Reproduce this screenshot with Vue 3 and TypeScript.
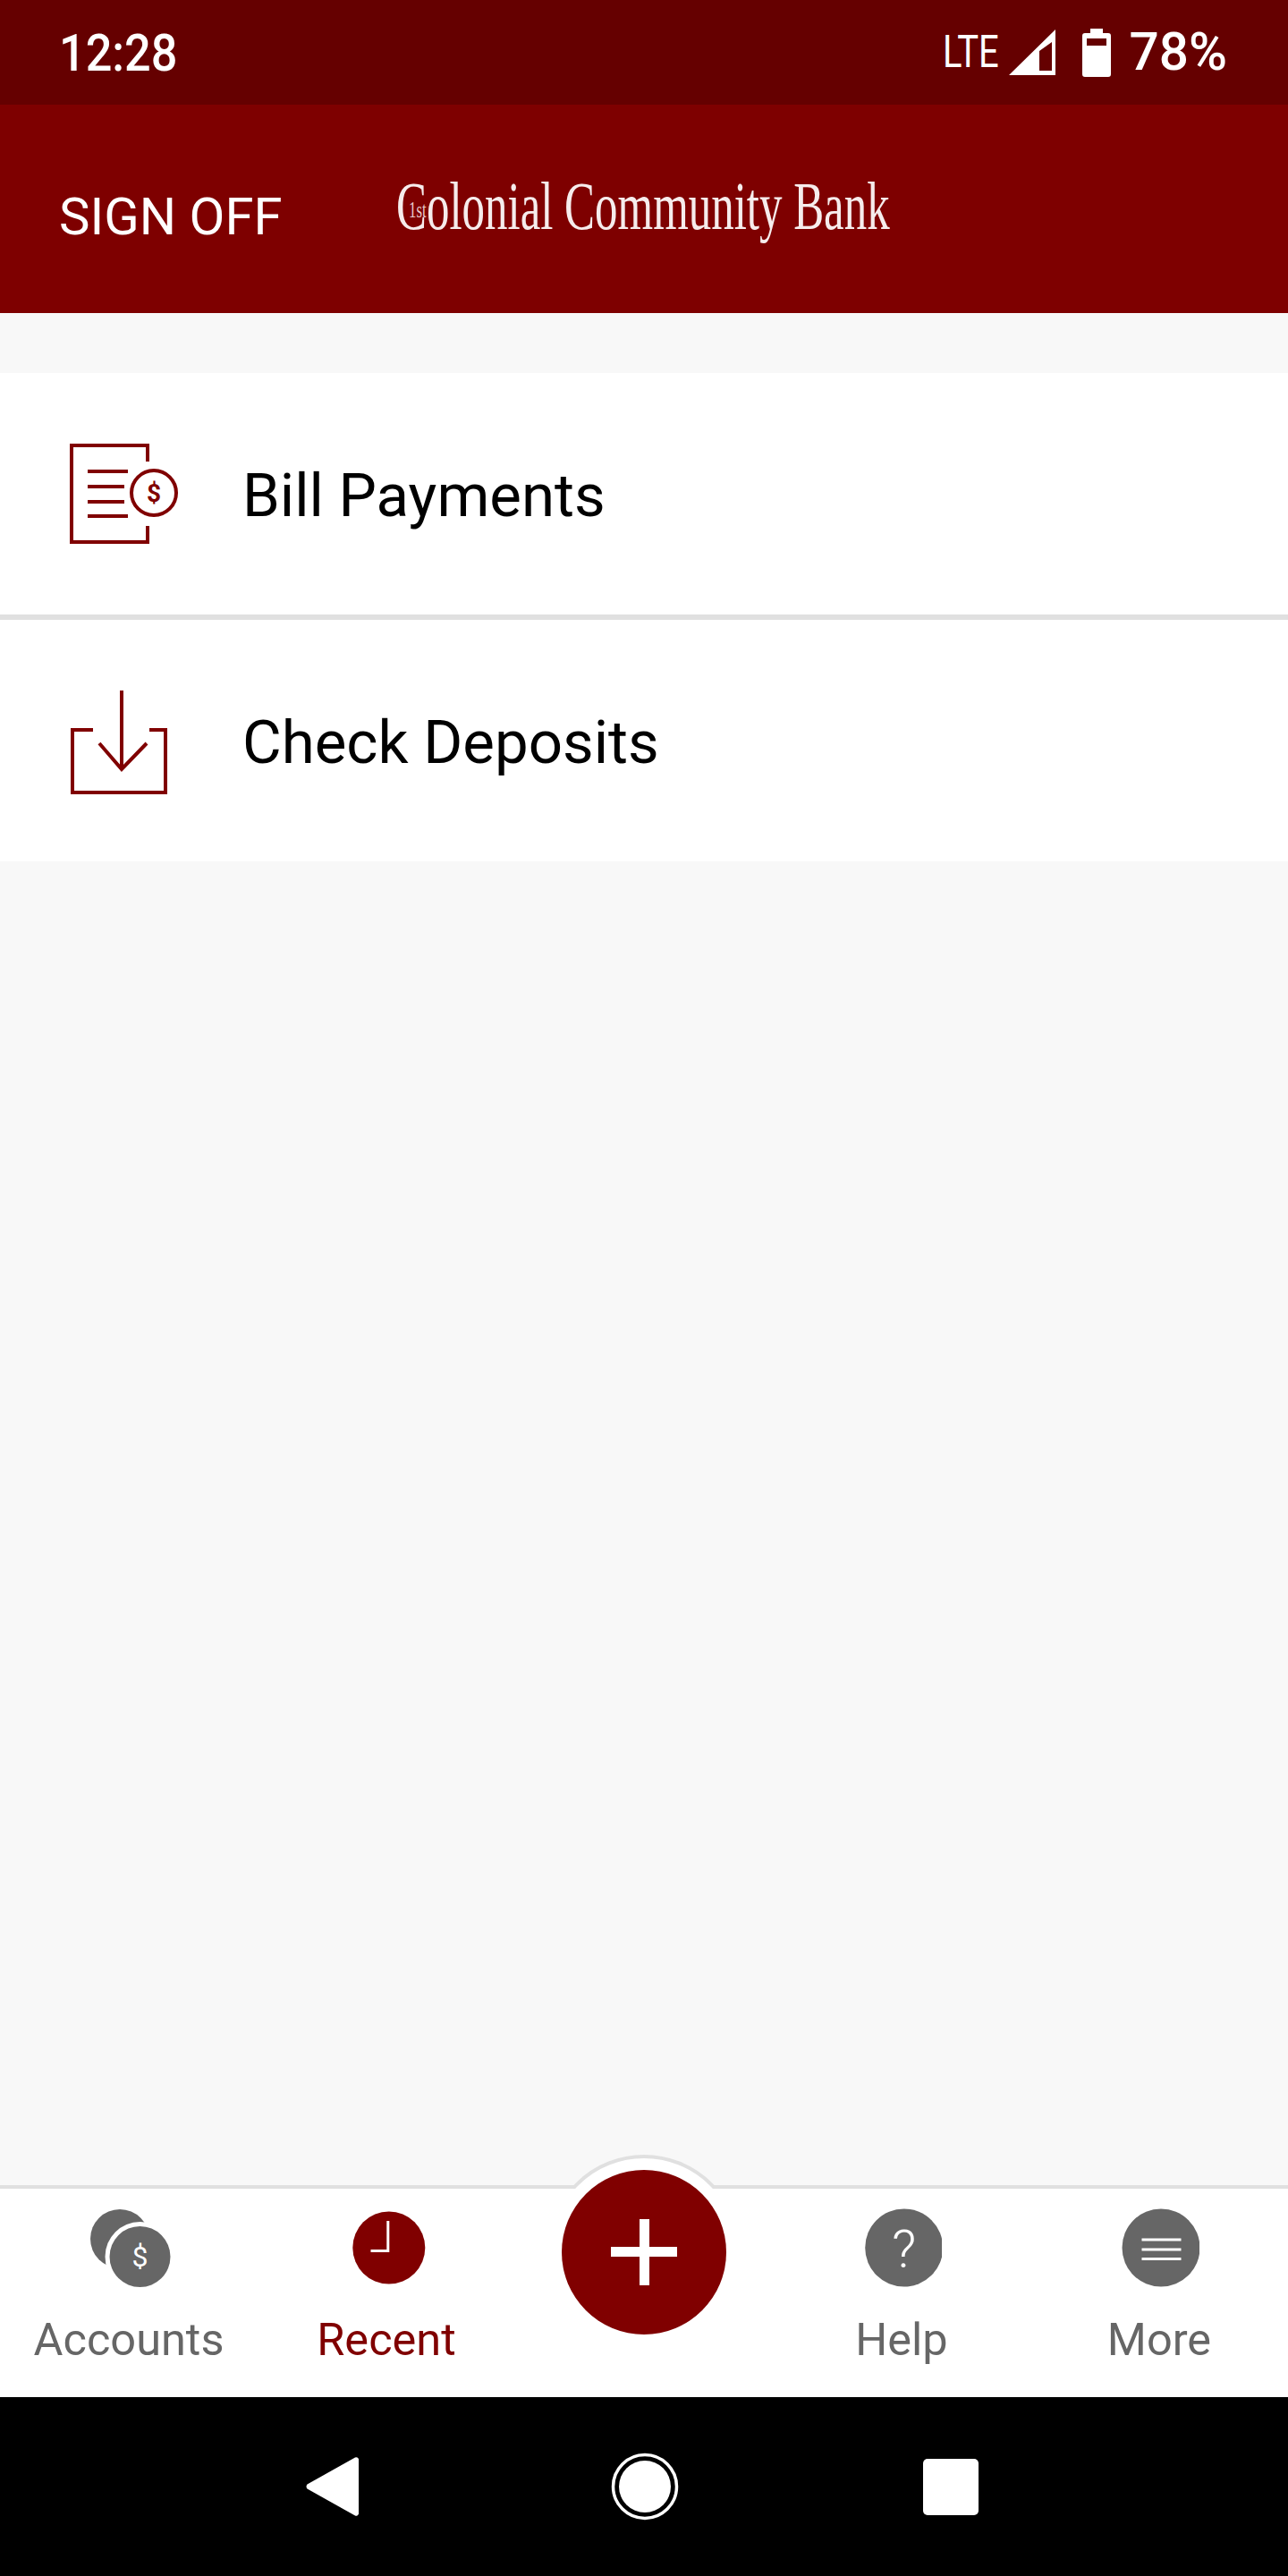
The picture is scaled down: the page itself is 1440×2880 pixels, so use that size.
<template>
  <div class="screen">
    <div class="status-bar">
      <span class="clock">12:28</span>
      <div class="status-right">
        <span class="lte">LTE</span>
        <svg class="signal" width="52" height="51" viewBox="0 0 52 51">
          <path fill="#fff" fill-rule="evenodd" d="M52 0V51H0ZM34 24V46H48V14Z" />
        </svg>
        <svg class="battery" width="32" height="54" viewBox="0 0 32 54">
          <path fill="#fff" fill-rule="evenodd" d="M9 0h14v5h6a3 3 0 0 1 3 3v43a3 3 0 0 1-3 3H3a3 3 0 0 1-3-3V8a3 3 0 0 1 3-3h6ZM5 11v8h22v-8Z" />
        </svg>
        <span class="percent">78%</span>
      </div>
    </div>

    <header class="app-header">
      <span class="sign-off">SIGN OFF</span>
      <div class="logo">
        Colonial Community Bank
        <span class="logo-first">1st</span>
      </div>
    </header>

    <main class="content">
      <div class="menu">
        <div v-for="item in menuItems" :key="item.label" class="menu-row">
          <svg v-if="item.icon === 'bill'" class="menu-icon" width="135" height="120" viewBox="0 0 135 120">
            <g fill="none" stroke="#800000" stroke-width="4">
              <path d="M95 24V6H10V114H95V96" />
              <path d="M28 35h45M28 52h41M28 69h41M28 85h45" />
              <circle cx="102" cy="59" r="25" />
            </g>
            <text x="102" y="69" class="bill-dollar" text-anchor="middle">$</text>
          </svg>
          <svg v-else class="menu-icon" width="135" height="120" viewBox="0 0 135 120">
            <g fill="none" stroke="#800000" stroke-width="4">
              <path d="M34 48H11V118H115V48H97" />
              <path d="M66 4V92" />
              <path d="M41 63L66 92L94 63" />
            </g>
          </svg>
          <span class="menu-label">{{ item.label }}</span>
        </div>
      </div>
    </main>

    <div class="tab-bar">
      <div class="fab-bump"></div>
      <div class="fab">
        <span class="plus-h"></span>
        <span class="plus-v"></span>
      </div>
      <div v-for="tab in tabs" :key="tab.label" class="tab" :class="{ active: tab.active }">
        <div class="tab-icon">
          <svg v-if="tab.icon === 'accounts'" width="100" height="90" viewBox="0 0 100 90">
            <circle cx="40" cy="34" r="33" fill="#666" />
            <circle cx="62.500" cy="54" r="39" fill="#fff" />
            <circle cx="62.500" cy="54" r="34" fill="#666" />
            <text x="62.500" y="65" class="coin-dollar" text-anchor="middle">$</text>
          </svg>
          <svg v-else-if="tab.icon === 'recent'" width="90" height="90" viewBox="0 0 90 90">
            <circle cx="47.800" cy="44" r="40.500" fill="#800000" />
            <path d="M46.800 14V47.500H27.500" fill="none" stroke="#fff" stroke-width="3" />
          </svg>
          <svg v-else-if="tab.icon === 'help'" width="90" height="90" viewBox="0 0 90 90">
            <circle cx="47.700" cy="44" r="43.500" fill="#666" />
            <text x="47.700" y="66" class="help-mark" text-anchor="middle">?</text>
          </svg>
          <svg v-else-if="tab.icon === 'more'" width="90" height="90" viewBox="0 0 90 90">
            <circle cx="47" cy="44" r="43.500" fill="#666" />
            <path d="M25.500 35h44M25.500 46h44M25.500 56.500h44" fill="none" stroke="#fff" stroke-width="3" />
          </svg>
        </div>
        <span class="tab-label">{{ tab.label }}</span>
      </div>
    </div>

    <nav class="system-nav">
      <svg class="nav-back" width="60" height="68" viewBox="0 0 60 68">
        <path fill="#fff" d="M55 1.500a3 3 0 0 1 4 2v61a3 3 0 0 1-4 2L1.500 36.500a4 4 0 0 1 0-5Z" />
      </svg>
      <svg class="nav-home" width="76" height="76" viewBox="0 0 76 76">
        <circle cx="38" cy="38" r="35.500" fill="none" stroke="#fff" stroke-width="3.500" />
        <circle cx="38" cy="38" r="29" fill="#fff" />
      </svg>
      <div class="nav-square"></div>
    </nav>
  </div>
</template>

<script setup lang="ts">
interface MenuItem {
  label: string
  icon: 'bill' | 'deposit'
}

interface Tab {
  label: string
  icon: string
  active?: boolean
}

const menuItems: MenuItem[] = [
  { label: 'Bill Payments', icon: 'bill' },
  { label: 'Check Deposits', icon: 'deposit' },
]

const tabs: Tab[] = [
  { label: 'Accounts', icon: 'accounts' },
  { label: 'Recent', icon: 'recent', active: true },
  { label: '', icon: 'none' },
  { label: 'Help', icon: 'help' },
  { label: 'More', icon: 'more' },
]
</script>

<style>
body {
  background: #f8f8f8;
}
</style>

<style scoped>
.screen {
  display: flex;
  flex-direction: column;
  height: 2880px;
  overflow: hidden;
  font-family: Roboto, 'Noto Sans', sans-serif;
  background: #f8f8f8;
}

.status-bar {
  height: 117px;
  background: #650000;
  color: #fff;
  display: flex;
  align-items: center;
  justify-content: space-between;
  padding: 0 68px 0 66px;
  box-sizing: border-box;
}

.clock,
.percent {
  font-weight: 500;
  line-height: 1;
}

.clock {
  font-size: 58px;
  display: inline-block;
  transform: scaleX(0.9);
  transform-origin: left center;
}

.status-right {
  display: flex;
  align-items: center;
}

.lte {
  font-size: 50px;
  line-height: 1;
  display: inline-block;
  width: 66px;
  margin-right: 8px;
  margin-top: -1px;
  white-space: nowrap;
  transform: scaleX(0.8);
  transform-origin: left center;
}

.signal {
  margin-top: -1px;
}

.battery {
  margin-left: 30px;
  margin-top: 1px;
}

.percent {
  font-size: 58.5px;
  margin-left: 20px;
}

.app-header {
  height: 233px;
  background: #7e0000;
  color: #fff;
  display: flex;
  align-items: center;
  padding-left: 66px;
  box-sizing: border-box;
}

.sign-off {
  font-size: 58px;
  line-height: 1;
  width: 377px;
  padding-top: 16px;
  white-space: nowrap;
}

.logo {
  position: relative;
  margin-bottom: 8px;
  font-family: 'Liberation Serif', serif;
  font-size: 76px;
  line-height: 76px;
  color: #f6ecec;
  white-space: nowrap;
  transform: scaleX(0.67);
  transform-origin: left center;
}

.logo-first {
  position: absolute;
  left: 21px;
  top: 30px;
  font-size: 25px;
  line-height: 25px;
  color: #e8cccc;
}

.content {
  flex: 1;
  padding-top: 67px;
}

.menu {
  background: #fff;
}

.menu-row {
  height: 270px;
  display: flex;
  align-items: center;
  padding-left: 70px;
  box-sizing: border-box;
}

.menu-row + .menu-row {
  height: 276px;
  border-top: 6px solid #e0e0e0;
}

.menu-icon {
  margin-right: 66px;
  flex-shrink: 0;
}

.bill-dollar {
  font-family: Roboto, sans-serif;
  font-size: 28px;
  font-weight: 700;
  fill: #800000;
}

.menu-label {
  font-size: 67.2px;
  color: #000;
  line-height: 1;
  padding-top: 5px;
}

.tab-bar {
  position: relative;
  height: 237px;
  box-sizing: border-box;
  background: #fff;
  border-top: 4px solid #e0e0e0;
  display: grid;
  grid-template-columns: repeat(5, 1fr);
}

.fab-bump {
  position: absolute;
  left: 612px;
  top: -38px;
  width: 216px;
  height: 216px;
  box-sizing: border-box;
  border-radius: 50%;
  border: 4px solid #e0e0e0;
  background: #fff;
  clip-path: inset(0 0 178px 0);
}

.fab {
  position: absolute;
  left: 628px;
  top: -21px;
  width: 184px;
  height: 184px;
  border-radius: 50%;
  background: #800000;
}

.plus-h,
.plus-v {
  position: absolute;
  background: #fff;
}

.plus-h {
  left: 55px;
  top: 86px;
  width: 74px;
  height: 11px;
}

.plus-v {
  left: 87px;
  top: 55px;
  width: 11px;
  height: 74px;
}

.tab {
  display: flex;
  flex-direction: column;
  align-items: center;
  color: #666;
}

.tab.active {
  color: #800000;
}

.tab-icon {
  height: 90px;
  margin-top: 22px;
  display: flex;
  justify-content: center;
}

.tab-label {
  font-size: 50.5px;
  line-height: 58px;
  margin-top: 28px;
}

.coin-dollar {
  font-family: Roboto, sans-serif;
  font-size: 32px;
  fill: #fff;
}

.help-mark {
  font-family: Roboto, sans-serif;
  font-size: 60px;
  font-weight: 300;
  fill: #fff;
}

.system-nav {
  height: 200px;
  background: #000;
  display: flex;
  align-items: center;
  padding-left: 342px;
  box-sizing: border-box;
}

.nav-home {
  margin-left: 281px;
}

.nav-square {
  width: 62px;
  height: 63px;
  margin-left: 273px;
  border-radius: 5px;
  background: #fff;
}
</style>
